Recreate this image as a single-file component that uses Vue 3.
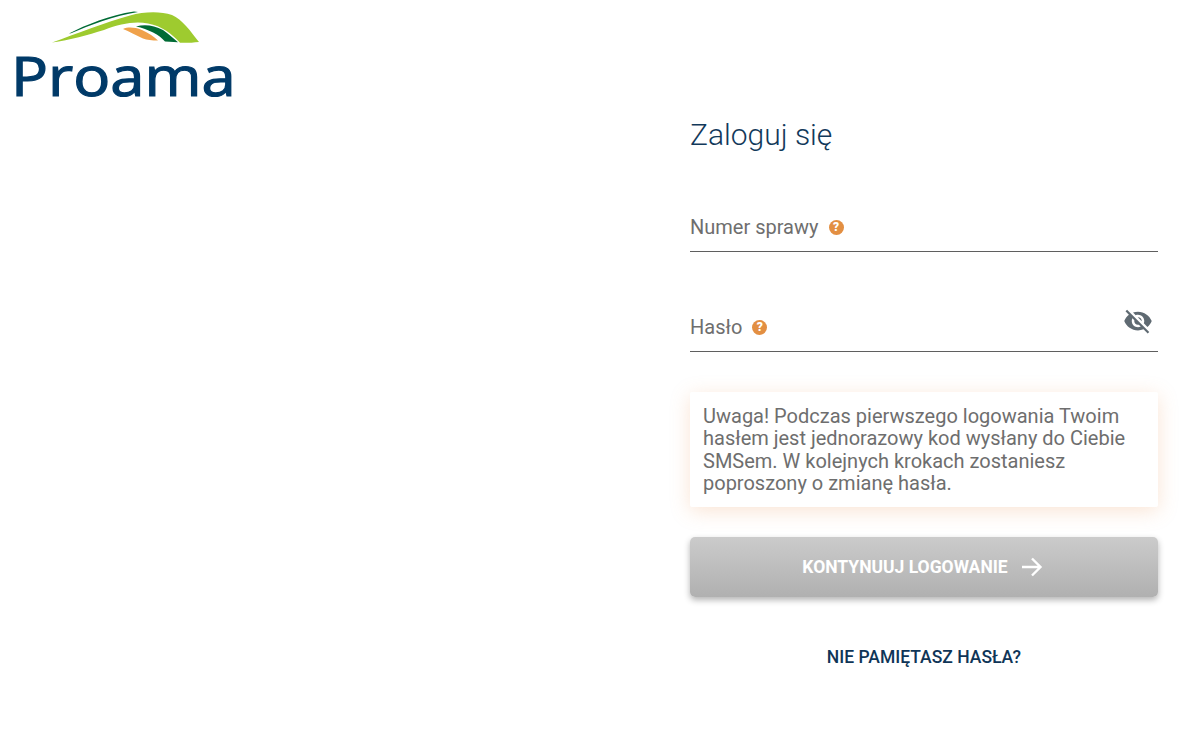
<template>
  <div class="page">
    <header class="logo">
      <svg class="logo-mark" viewBox="0 0 150 36" width="150" height="36" aria-hidden="true">
        <path fill="#006b35" d="M17 23.500 C34 15 58 5 82 1.600 L86 2 C62 6 38 15 19 23.300 Z" />
        <path fill="#9ecb2f" d="M0 32.500 C24 24 54 12 78 5.500 C92 1.600 108 1 120 5 C130 9 139 22 147 32 C141 32.700 134 33 128 32.800 C120 24 110 16 96 13.500 C82 11 68 14 52 20 C36 25 18 30 0 32.500 Z" />
        <path fill="#006b35" d="M84 16.500 C92 14 102 15 111 20 C117 24 122 29 126 32.300 L113 31.600 C108 25 96 19 84 16.500 Z" />
        <path fill="#f0a24b" d="M71 19 C76 17 82 17 90 20 C97 23 102 27 106 30.500 C100 30.500 95 30 91 28.500 C84 25 77 21.500 71 19 Z" />
      </svg>
      <span class="logo-name">Proama</span>
    </header>

    <main class="login">
      <h1 class="title">Zaloguj się</h1>

      <div class="field">
        <span class="label">Numer sprawy</span>
        <span class="hint">?</span>
      </div>

      <div class="field field-password">
        <span class="label">Hasło</span>
        <span class="hint">?</span>
        <svg class="eye" viewBox="0 0 24 24" width="30" height="30" aria-hidden="true">
          <path fill="#5f6a72" d="M12 7c2.760 0 5 2.240 5 5 0 .650-.130 1.260-.360 1.830l2.920 2.920c1.510-1.260 2.700-2.890 3.430-4.750-1.730-4.390-6-7.500-11-7.500-1.400 0-2.740.250-3.980.700l2.160 2.160C10.740 7.130 11.350 7 12 7zM2 4.270l2.280 2.280.460.460C3.080 8.300 1.780 10.020 1 12c1.730 4.390 6 7.500 11 7.500 1.550 0 3.030-.300 4.380-.840l.420.420L19.730 22 21 20.730 3.270 3 2 4.270zM7.530 9.800l1.550 1.550c-.050.210-.080.430-.080.650 0 1.660 1.340 3 3 3 .220 0 .440-.030.650-.080l1.550 1.550c-.670.330-1.410.530-2.200.530-2.760 0-5-2.240-5-5 0-.790.200-1.530.530-2.200zm4.310-.780l3.150 3.150.020-.160c0-1.660-1.340-3-3-3l-.170.010z" />
        </svg>
      </div>

      <p class="notice">
        Uwaga! Podczas pierwszego logowania Twoim hasłem jest jednorazowy kod wysłany do Ciebie SMSem. W kolejnych krokach zostaniesz poproszony o zmianę hasła.
      </p>

      <button class="submit" type="button" disabled>
        <span>KONTYNUUJ LOGOWANIE</span>
        <svg viewBox="0 0 24 24" width="24" height="24" aria-hidden="true">
          <path fill="none" stroke="#fff" stroke-width="2.400" d="M0 12h18M10 3.500 18.500 12 10 20.500" />
        </svg>
      </button>

      <a class="forgot" href="#">NIE PAMIĘTASZ HASŁA?</a>
    </main>
  </div>
</template>

<script setup>
</script>

<style scoped>
.page {
  position: relative;
  height: 738px;
  background: #fff;
  font-family: Roboto, "Liberation Sans", sans-serif;
  overflow: hidden;
}

.logo {
  position: absolute;
  top: 10px;
  left: 14px;
  width: 222px;
}

.logo-mark {
  display: block;
  margin-left: 38px;
}

.logo-name {
  display: block;
  margin-left: -3px;
  font-family: "Open Sans", sans-serif;
  font-size: 55px;
  line-height: 58px;
  color: #003a68;
  -webkit-text-stroke: 1.200px #003a68;
  transform: scaleX(1.12);
  transform-origin: left;
}

.login {
  display: flex;
  flex-direction: column;
  width: 468px;
  margin-left: 690px;
  padding-top: 117px;
}

.title {
  margin: 0;
  font-size: 30px;
  line-height: 36px;
  font-weight: 300;
  color: #12395a;
}

.field {
  display: flex;
  align-items: center;
  gap: 10px;
  position: relative;
  height: 34px;
  margin-top: 57px;
  padding-bottom: 7px;
  border-bottom: 1px solid #5f5f5f;
  color: #6e6e6e;
  font-size: 20px;
}

.field-password {
  margin-top: 58px;
}

.hint {
  width: 15px;
  height: 15px;
  border-radius: 50%;
  background: #e38f42;
  color: #fff;
  font-size: 12px;
  font-weight: 900;
  line-height: 15px;
  text-align: center;
}

.eye {
  position: absolute;
  right: 5px;
  top: -4px;
}

.notice {
  margin: 40px 0 0;
  padding: 12.600px 13px 12.400px;
  background: #fff;
  color: #6e6e6e;
  font-size: 20px;
  line-height: 22.500px;
  border-radius: 2px;
  box-shadow: 0 4px 20px rgba(235, 150, 90, 0.26);
}

.submit {
  display: flex;
  align-items: center;
  justify-content: center;
  gap: 14px;
  height: 60px;
  margin-top: 30px;
  border: 0;
  border-radius: 5px;
  background: linear-gradient(#cbcbcb, #b0b0b0);
  box-shadow: 0 3px 6px rgba(0, 0, 0, 0.3);
  color: #fff;
  font-family: inherit;
  font-size: 17.500px;
  font-weight: 700;
}

.forgot {
  margin-top: 50px;
  text-align: center;
  color: #0f3557;
  font-size: 17.500px;
  font-weight: 500;
  text-decoration: none;
}
</style>
